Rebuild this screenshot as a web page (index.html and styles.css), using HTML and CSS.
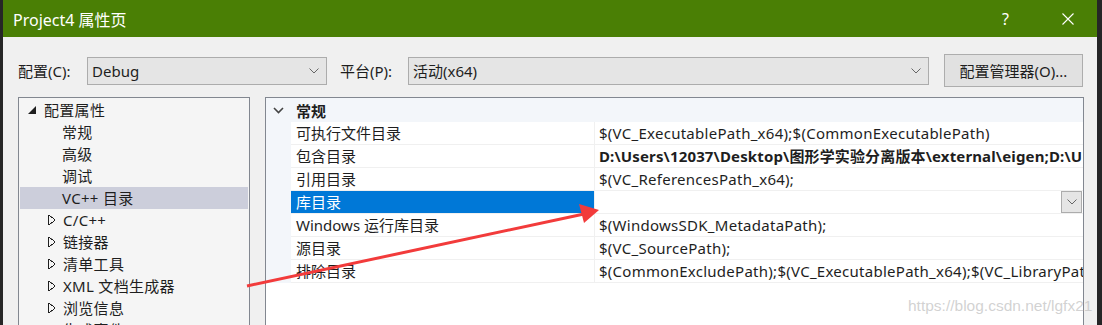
FILE: index.html
```html
<!DOCTYPE html>
<html>
<head>
  <title>Project4 属性页</title>
  <link rel="stylesheet" href="styles.css">
</head>
<body>
  <div class="screen">
    <div class="edge-left"></div>

    <div class="dialog">
      <div class="titlebar">
        <span class="title">Project4 属性页</span>
        <span class="help">?</span>
        <svg class="close" width="12" height="12" viewBox="0 0 12 12">
          <path d="M0.5 0.5 L11.5 11.5 M11.5 0.5 L0.5 11.5" stroke="#fff" stroke-width="1.1" fill="none"/>
        </svg>
      </div>

      <div class="content">
        <div class="toolbar">
          <label class="lbl lbl-config">配置(C):</label>
          <div class="combo combo-config">
            <span>Debug</span>
            <svg class="chev" width="10" height="6" viewBox="0 0 10 6"><path d="M0.5 0.5 L5 5 L9.5 0.5" stroke="#666" fill="none"/></svg>
          </div>
          <label class="lbl lbl-platform">平台(P):</label>
          <div class="combo combo-platform">
            <span>活动(x64)</span>
            <svg class="chev" width="10" height="6" viewBox="0 0 10 6"><path d="M0.5 0.5 L5 5 L9.5 0.5" stroke="#666" fill="none"/></svg>
          </div>
          <button class="btn">配置管理器(O)...</button>
        </div>

        <div class="panels">
          <div class="tree">
            <div class="node root"><span class="tri-open"></span>配置属性</div>
            <div class="node leaf">常规</div>
            <div class="node leaf">高级</div>
            <div class="node leaf">调试</div>
            <div class="node leaf selected">VC++ 目录</div>
            <div class="node sub"><span class="tri-closed"></span>C/C++</div>
            <div class="node sub"><span class="tri-closed"></span>链接器</div>
            <div class="node sub"><span class="tri-closed"></span>清单工具</div>
            <div class="node sub"><span class="tri-closed"></span>XML 文档生成器</div>
            <div class="node sub"><span class="tri-closed"></span>浏览信息</div>
            <div class="node sub"><span class="tri-closed"></span>生成事件</div>
          </div>

          <div class="grid">
            <div class="group">
              <svg class="group-chev" width="11" height="7" viewBox="0 0 11 7"><path d="M1 1 L5.5 5.5 L10 1" stroke="#444" stroke-width="1.6" fill="none"/></svg>
              <span class="group-name">常规</span>
            </div>
            <div class="prop">
              <div class="gutter"></div>
              <div class="name">可执行文件目录</div>
              <div class="value">$(VC_ExecutablePath_x64);$(CommonExecutablePath)</div>
            </div>
            <div class="prop">
              <div class="gutter"></div>
              <div class="name">包含目录</div>
              <div class="value bold">D:\Users\12037\Desktop\图形学实验分离版本\external\eigen;D:\U</div>
            </div>
            <div class="prop">
              <div class="gutter"></div>
              <div class="name">引用目录</div>
              <div class="value">$(VC_ReferencesPath_x64);</div>
            </div>
            <div class="prop active">
              <div class="gutter"></div>
              <div class="name">库目录</div>
              <div class="value">
                <span class="drop">
                  <svg width="10" height="6" viewBox="0 0 10 6"><path d="M0.5 0.5 L5 5 L9.5 0.5" stroke="#666" fill="none"/></svg>
                </span>
              </div>
            </div>
            <div class="prop">
              <div class="gutter"></div>
              <div class="name">Windows 运行库目录</div>
              <div class="value">$(WindowsSDK_MetadataPath);</div>
            </div>
            <div class="prop">
              <div class="gutter"></div>
              <div class="name">源目录</div>
              <div class="value">$(VC_SourcePath);</div>
            </div>
            <div class="prop">
              <div class="gutter"></div>
              <div class="name">排除目录</div>
              <div class="value">$(CommonExcludePath);$(VC_ExecutablePath_x64);$(VC_LibraryPat</div>
            </div>
          </div>
        </div>
      </div>
    </div>

    <div class="edge-right"></div>

    <!-- red annotation arrow drawn over the screenshot -->
    <svg class="arrow" width="1102" height="325" viewBox="0 0 1102 325">
      <line x1="247" y1="286" x2="584" y2="214" stroke="#f23b3b" stroke-width="3"/>
      <polygon points="599,210 579,204 584,223" fill="#f23b3b"/>
    </svg>
    <div class="watermark">https://blog.csdn.net/lgfx21</div>
  </div>
</body>
</html>
```

FILE: styles.css
```css
* {
  box-sizing: border-box;
  margin: 0;
  padding: 0;
}
body {
  width: 1102px;
  height: 325px;
  overflow: hidden;
  background-color: #2b2b2b;
  font-family: "Noto Sans", "Noto Sans CJK SC", sans-serif;
  font-size: 15px;
  color: #1e1e1e;
}
.screen {
  position: relative;
  display: flex;
  height: 325px;
}
.edge-left {
  width: 3px;
  background-color: #262626;
}
.edge-right {
  width: 5px;
  background-color: #252526;
}
.dialog {
  flex: 1;
  display: flex;
  flex-direction: column;
  background-color: #f0f0f0;
  overflow: hidden;
}
.titlebar {
  flex-shrink: 0;
  height: 37px;
  background-color: #4a7f05;
  color: #fff;
  display: flex;
  align-items: center;
  padding-left: 10px;
}
.title {
  font-size: 16px;
  flex: 1;
}
.help {
  font-size: 16px;
  margin-right: 53px;
}
.close {
  margin-right: 23px;
}
.content {
  flex-shrink: 0;
  padding: 17px 0 0 15px;
}
.toolbar {
  display: flex;
  align-items: center;
  height: 33px;
}
.lbl {
  font-size: 15px;
}
.lbl-config {
  width: 69px;
}
.lbl-platform {
  width: 68px;
  margin-left: 13px;
}
.combo {
  height: 28px;
  background-color: #e5e5e5;
  border: 1px solid #acacac;
  display: flex;
  align-items: center;
  justify-content: space-between;
  padding: 0 7px 0 4px;
  font-size: 15px;
}
.combo-config {
  width: 240px;
}
.combo-platform {
  width: 521px;
}
.btn {
  margin-left: 15px;
  width: 139px;
  height: 33px;
  background-color: #e1e1e1;
  border: 1px solid #adadad;
  font-family: inherit;
  font-size: 15px;
  color: #1e1e1e;
}
.panels {
  display: flex;
  margin-top: 10px;
  height: 240px;
}
.tree {
  width: 232px;
  border: 1px solid #828790;
  border-bottom: none;
  background-color: #f5f5f5;
  padding: 1px 1px 0 1px;
}
.node {
  height: 22px;
  line-height: 22px;
  display: flex;
  align-items: center;
  white-space: nowrap;
  letter-spacing: 0.3px;
}
.root {
  padding-left: 8px;
}
.leaf {
  padding-left: 42px;
}
.sub {
  padding-left: 28px;
}
.selected {
  background-color: #cccedb;
}
.tri-open {
  width: 0;
  height: 0;
  border-left: 8px solid transparent;
  border-bottom: 8px solid #1e1e1e;
  margin-right: 8px;
}
.tri-closed {
  width: 7px;
  height: 10px;
  margin-right: 8px;
  background:
    linear-gradient(to top right, transparent 45%, #1e1e1e 46%, #1e1e1e 56%, transparent 57%) top / 7px 5px no-repeat,
    linear-gradient(to bottom right, transparent 45%, #1e1e1e 46%, #1e1e1e 56%, transparent 57%) bottom / 7px 5px no-repeat;
  border-left: 1px solid #1e1e1e;
}
.grid {
  margin-left: 15px;
  width: 819px;
  border: 1px solid #828790;
  border-bottom: none;
  background-color: #fff;
  overflow: hidden;
}
.group {
  height: 24px;
  display: flex;
  align-items: center;
  background-color: #f3f6fa;
}
.group-chev {
  margin-left: 7px;
}
.group-name {
  font-weight: bold;
  margin-left: 12px;
}
.prop {
  display: flex;
  height: 23px;
}
.gutter {
  width: 25px;
  background-color: #f3f6fa;
}
.name,
.value {
  height: 23px;
  line-height: 22px;
  border-bottom: 1px solid #f0f0f0;
  white-space: nowrap;
  overflow: hidden;
}
.name {
  width: 304px;
  padding-left: 5px;
  border-right: 1px solid #f0f0f0;
}
.value {
  flex: 1;
  padding-left: 4px;
  letter-spacing: 0.27px;
}
.bold {
  font-weight: bold;
  letter-spacing: 0.14px;
}
.active .name {
  background-color: #0078d7;
  color: #fff;
}
.active .value {
  display: flex;
  justify-content: flex-end;
  padding-right: 1px;
}
.drop {
  width: 21px;
  height: 22px;
  background-color: #e5e5e5;
  border: 1px solid #acacac;
  display: flex;
  align-items: center;
  justify-content: center;
}
.arrow {
  position: absolute;
  left: 0;
  top: 0;
}
.watermark {
  position: absolute;
  left: 908px;
  top: 297px;
  font-family: "Liberation Sans", sans-serif;
  font-size: 15.5px;
  color: rgba(190, 190, 190, 0.7);
}
```
